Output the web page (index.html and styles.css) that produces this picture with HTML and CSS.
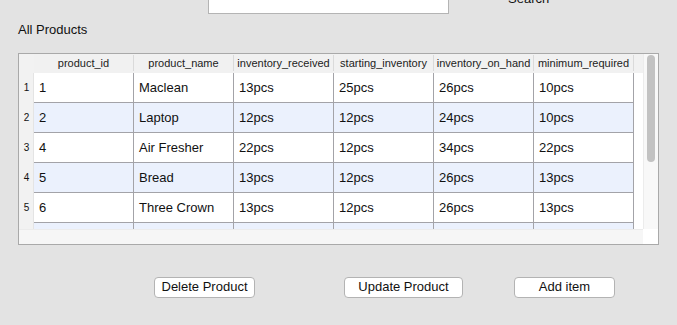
FILE: index.html
```html
<!DOCTYPE html>
<html lang="en">
<head>
    <meta charset="UTF-8">
    <meta name="viewport" content="width=device-width, initial-scale=1.0">
    <title>Inventory - All Products</title>
    <link rel="stylesheet" href="styles.css">
</head>
<body>

    <!-- Search bar -->
    <div class="topbar">
        <input type="text" class="search-field">
        <span class="search-label">Search</span>
    </div>

    <h2 class="title">All Products</h2>

    <!-- Products table -->
    <div class="panel">
        <div class="main">
            <div class="row head">
                <div class="num"></div>
                <div class="hcell">product_id</div>
                <div class="hcell">product_name</div>
                <div class="hcell">inventory_received</div>
                <div class="hcell">starting_inventory</div>
                <div class="hcell">inventory_on_hand</div>
                <div class="hcell">minimum_required</div>
            </div>
            <div class="row">
                <div class="num">1</div>
                <div class="cell">1</div>
                <div class="cell">Maclean</div>
                <div class="cell">13pcs</div>
                <div class="cell">25pcs</div>
                <div class="cell">26pcs</div>
                <div class="cell">10pcs</div>
            </div>
            <div class="row alt">
                <div class="num">2</div>
                <div class="cell">2</div>
                <div class="cell">Laptop</div>
                <div class="cell">12pcs</div>
                <div class="cell">12pcs</div>
                <div class="cell">24pcs</div>
                <div class="cell">10pcs</div>
            </div>
            <div class="row">
                <div class="num">3</div>
                <div class="cell">4</div>
                <div class="cell">Air Fresher</div>
                <div class="cell">22pcs</div>
                <div class="cell">12pcs</div>
                <div class="cell">34pcs</div>
                <div class="cell">22pcs</div>
            </div>
            <div class="row alt">
                <div class="num">4</div>
                <div class="cell">5</div>
                <div class="cell">Bread</div>
                <div class="cell">13pcs</div>
                <div class="cell">12pcs</div>
                <div class="cell">26pcs</div>
                <div class="cell">13pcs</div>
            </div>
            <div class="row">
                <div class="num">5</div>
                <div class="cell">6</div>
                <div class="cell">Three Crown</div>
                <div class="cell">13pcs</div>
                <div class="cell">12pcs</div>
                <div class="cell">26pcs</div>
                <div class="cell">13pcs</div>
            </div>
            <!-- next row, scrolled out of view -->
            <div class="row alt">
                <div class="num"></div>
                <div class="cell"></div>
                <div class="cell"></div>
                <div class="cell"></div>
                <div class="cell"></div>
                <div class="cell"></div>
                <div class="cell"></div>
            </div>
        </div>
        <div class="vscroll"><div class="thumb"></div></div>
        <div class="hscroll"></div>
        <div class="corner"></div>
    </div>

    <!-- Actions -->
    <div class="actions">
        <button class="btn btn-delete">Delete Product</button>
        <button class="btn btn-update">Update Product</button>
        <button class="btn btn-add">Add item</button>
    </div>

</body>
</html>
```

FILE: styles.css
```css
body {
    font-family: "Liberation Sans", Arial, sans-serif;
    font-size: 13px;
    background-color: #e3e3e3;
    color: #111;
    margin: 0;
    padding: 0;
    overflow: hidden;
}

/* Top search bar */
.topbar {
    display: flex;
    align-items: flex-start;
    height: 24px;
    margin-top: -10px;
    padding-left: 208px;
}

.search-field {
    box-sizing: border-box;
    width: 241px;
    height: 24px;
    margin: 0;
    border: 1px solid #b4b4b4;
    background: white;
}

.search-label {
    margin-left: 59px;
    margin-top: 1px;
    line-height: 15px;
}

.title {
    font-size: 13px;
    font-weight: normal;
    line-height: 15px;
    margin: 8px 0 16px 18px;
}

/* Table panel */
.panel {
    display: grid;
    grid-template-columns: 624px 15px;
    grid-template-rows: 175px 15px;
    width: 639px;
    margin-left: 18px;
    border: 1px solid #a9a9a9;
    background: white;
}

.main {
    overflow: hidden;
    background: white;
}

.row {
    display: flex;
    height: 30px;
}

.row.alt .cell {
    background-color: #ebf1fd;
}

.row.head {
    height: 19px;
    background-color: #f1f1f1;
}

.num {
    box-sizing: border-box;
    width: 15px;
    flex: none;
    background-color: #f2f2f2;
    border-right: 1px solid #e4e4e4;
    font-size: 10px;
    line-height: 30px;
    text-align: center;
    padding-left: 1px;
}

.head .num {
    border-right: none;
}

.hcell {
    box-sizing: border-box;
    width: 100px;
    flex: none;
    font-size: 11px;
    line-height: 16px;
    text-align: center;
    color: #222;
    border-right: 1px solid #dadada;
    margin: 1px 0 2px;
}

.cell {
    box-sizing: border-box;
    width: 100px;
    flex: none;
    padding-left: 5px;
    line-height: 29px;
    border-right: 1px solid #a3a3a8;
    border-bottom: 1px solid #a3a3a8;
}

/* Scrollbars */
.vscroll {
    grid-row: 1;
    grid-column: 2;
    background-color: #f8f8f8;
    border-left: 1px solid #ececec;
    padding: 1px 0 0 3px;
}

.thumb {
    width: 8px;
    height: 107px;
    background-color: #c2c2c2;
    border-radius: 4px;
}

.hscroll {
    background-color: #f6f6f6;
    border-top: 1px solid #ececec;
}

.corner {
    background: white;
}

/* Buttons */
.actions {
    display: flex;
    margin-top: 32px;
    padding-left: 154px;
}

.btn {
    box-sizing: border-box;
    height: 21px;
    padding: 0 0 2px;
    font-family: inherit;
    font-size: 13px;
    color: #111;
    background: white;
    border: 1px solid #b3b3b3;
    border-radius: 4px;
}

.btn-delete {
    width: 101px;
}

.btn-update {
    width: 119px;
    margin-left: 89px;
}

.btn-add {
    width: 101px;
    margin-left: 51px;
}
```
